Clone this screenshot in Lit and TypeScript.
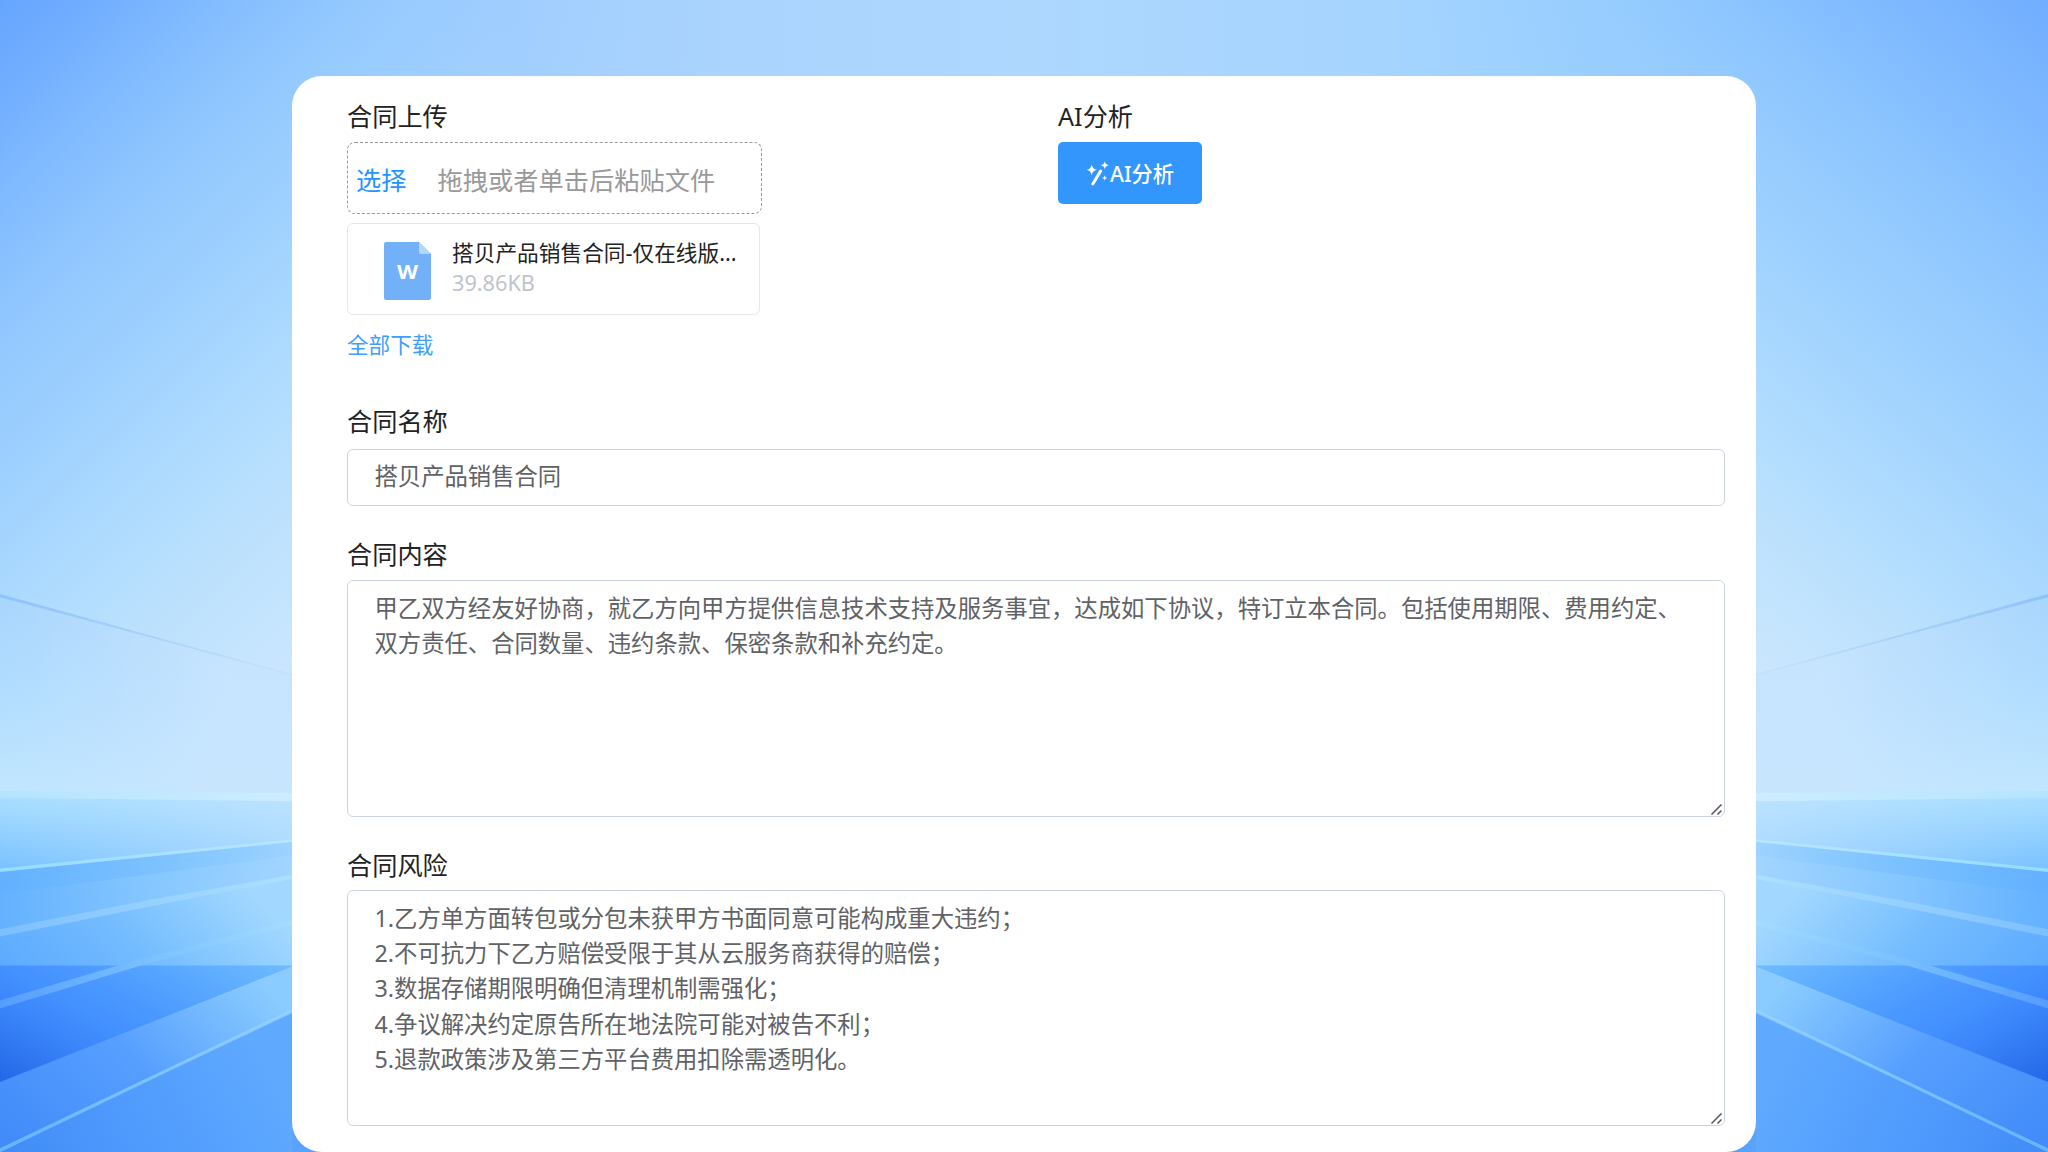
import { LitElement, html, svg, css } from "lit";
import { customElement, property } from "lit/decorators.js";

/** One side of the perspective backdrop; drawn once and mirrored for the other side. */
const sidePanel = () => svg`
  <polygon points="0,591 292,661 292,768 0,766" fill="url(#wall)"></polygon>
  <polygon points="0,591 292,661 292,768 0,766" fill="url(#wallSide)"></polygon>
  <polygon points="0,590 292,661 292,662 0,593" fill="url(#wallEdge)"></polygon>

  <polygon points="0,770 292,772 292,815 0,836" fill="url(#floorFar)"></polygon>
  <polygon points="0,770 292,772 292,812 0,836" fill="url(#fadeRight)"></polygon>
  <polygon points="0,764 292,766 292,773 0,770" fill="url(#horizon)"></polygon>

  <polygon points="0,833 292,807 292,823 0,857" fill="url(#b1)"></polygon>
  <polygon points="0,855 292,821 292,840 0,892" fill="url(#b2)"></polygon>
  <polygon points="0,890 292,840 292,920 0,920" fill="url(#b3)"></polygon>
  <polygon points="0,918 292,918 292,1152 0,1152" fill="url(#deep)"></polygon>
  <polygon points="0,1021 292,919 292,1152 0,1152" fill="url(#b5)"></polygon>
  <polygon points="0,1083 292,960 292,1152 0,1152" fill="url(#near)"></polygon>

  <polygon points="0,832.5 292,806.5 292,809 0,835.5" fill="url(#lineA)"></polygon>
  <polygon points="0,886 150,860 292,838 292,841.5 150,866 0,892.5" fill="url(#lineB)"></polygon>
  <polygon points="0,949 145,911 292,878 292,882 145,917 0,956" fill="url(#lineC)"></polygon>
  <polygon points="0,1079.5 292,956.5 292,959 0,1083" fill="url(#lineD)"></polygon>
`;

@customElement("app-backdrop")
export class AppBackdrop extends LitElement {
  static styles = css`
    :host { display: block; }
    .art { display: block; width: 100%; height: 100%; }
  `;

  render() {
    return html`
      <svg class="art" viewBox="0 0 2048 1152" preserveAspectRatio="none" aria-hidden="true">
        <defs>
          <linearGradient id="skyL" gradientUnits="userSpaceOnUse" x1="0" y1="0" x2="419.8" y2="493.5" gradientTransform="scale(1 1.148)">
            <stop offset="0" stop-color="#66a5ff"></stop>
            <stop offset=".12" stop-color="#74b0ff"></stop>
            <stop offset=".24" stop-color="#85beff"></stop>
            <stop offset=".35" stop-color="#92c8fe"></stop>
            <stop offset=".47" stop-color="#9ccfff"></stop>
            <stop offset=".59" stop-color="#a8d7fe"></stop>
            <stop offset=".71" stop-color="#b4defe"></stop>
            <stop offset=".83" stop-color="#bfe2fd"></stop>
            <stop offset="1" stop-color="#cce7fd"></stop>
          </linearGradient>
          <linearGradient id="skyR" gradientUnits="userSpaceOnUse" x1="2048" y1="0" x2="1640" y2="544" gradientTransform="scale(1 1.148)">
            <stop offset="0" stop-color="#70adff"></stop>
            <stop offset=".12" stop-color="#7cb7ff"></stop>
            <stop offset=".24" stop-color="#87c1ff"></stop>
            <stop offset=".35" stop-color="#92c9fe"></stop>
            <stop offset=".47" stop-color="#9cd0ff"></stop>
            <stop offset=".59" stop-color="#a8d7fe"></stop>
            <stop offset=".71" stop-color="#b4defe"></stop>
            <stop offset=".83" stop-color="#c1e3fd"></stop>
            <stop offset="1" stop-color="#cee8fd"></stop>
          </linearGradient>
          <linearGradient id="skyTop" gradientUnits="userSpaceOnUse" x1="292" y1="0" x2="1756" y2="0">
            <stop offset="0" stop-color="#95c8ff" stop-opacity="0"></stop>
            <stop offset=".15" stop-color="#9fccff" stop-opacity=".8"></stop>
            <stop offset=".3" stop-color="#aad4fd"></stop>
            <stop offset=".5" stop-color="#add7fd"></stop>
            <stop offset=".75" stop-color="#a5d4ff"></stop>
            <stop offset=".88" stop-color="#98ceff" stop-opacity=".8"></stop>
            <stop offset="1" stop-color="#8ec7ff" stop-opacity="0"></stop>
          </linearGradient>
          <linearGradient id="wall" gradientUnits="userSpaceOnUse" x1="60" y1="590" x2="40" y2="768">
            <stop offset="0" stop-color="#9fd0fc"></stop>
            <stop offset=".5" stop-color="#a9daff"></stop>
            <stop offset="1" stop-color="#bde6ff"></stop>
          </linearGradient>
          <linearGradient id="wallSide" gradientUnits="userSpaceOnUse" x1="0" y1="0" x2="292" y2="30">
            <stop offset="0" stop-color="#cbe6fe" stop-opacity="0"></stop>
            <stop offset="1" stop-color="#cbe6fe" stop-opacity=".88"></stop>
          </linearGradient>
          <linearGradient id="wallEdge" gradientUnits="userSpaceOnUse" x1="0" y1="0" x2="292" y2="0">
            <stop offset="0" stop-color="#8dc2fa"></stop>
            <stop offset="1" stop-color="#c4e1fc"></stop>
          </linearGradient>
          <linearGradient id="horizon" gradientUnits="userSpaceOnUse" x1="0" y1="0" x2="292" y2="0">
            <stop offset="0" stop-color="#b3e4ff"></stop>
            <stop offset="1" stop-color="#cdedff"></stop>
          </linearGradient>
          <linearGradient id="floorFar" gradientUnits="userSpaceOnUse" x1="0" y1="770" x2="0" y2="836">
            <stop offset="0" stop-color="#a8deff"></stop>
            <stop offset=".35" stop-color="#98d4ff"></stop>
            <stop offset="1" stop-color="#76c0ff"></stop>
          </linearGradient>
          <linearGradient id="fadeRight" gradientUnits="userSpaceOnUse" x1="0" y1="0" x2="292" y2="0">
            <stop offset="0" stop-color="#c8e6ff" stop-opacity="0"></stop>
            <stop offset="1" stop-color="#c8e6ff" stop-opacity=".6"></stop>
          </linearGradient>
          <linearGradient id="b1" gradientUnits="userSpaceOnUse" x1="0" y1="850" x2="292" y2="812">
            <stop offset="0" stop-color="#62b0ff"></stop>
            <stop offset=".55" stop-color="#7cc2ff"></stop>
            <stop offset="1" stop-color="#9dd3ff"></stop>
          </linearGradient>
          <linearGradient id="b2" gradientUnits="userSpaceOnUse" x1="0" y1="870" x2="292" y2="830">
            <stop offset="0" stop-color="#64b1ff"></stop>
            <stop offset=".5" stop-color="#84c6ff"></stop>
            <stop offset="1" stop-color="#a2d5ff"></stop>
          </linearGradient>
          <linearGradient id="b3" gradientUnits="userSpaceOnUse" x1="20" y1="950" x2="170" y2="780">
            <stop offset="0" stop-color="#5aa8ff"></stop>
            <stop offset=".5" stop-color="#74bcff"></stop>
            <stop offset="1" stop-color="#a2d8ff"></stop>
          </linearGradient>
          <linearGradient id="deep" gradientUnits="userSpaceOnUse" x1="0" y1="1020" x2="100" y2="820">
            <stop offset="0" stop-color="#2367e8"></stop>
            <stop offset=".08" stop-color="#2a70ec"></stop>
            <stop offset=".28" stop-color="#3b86fa"></stop>
            <stop offset=".41" stop-color="#4390ff"></stop>
            <stop offset=".54" stop-color="#4a98ff"></stop>
            <stop offset=".7" stop-color="#55a5ff"></stop>
            <stop offset="1" stop-color="#70bcff"></stop>
          </linearGradient>
          <linearGradient id="b5" gradientUnits="userSpaceOnUse" x1="0" y1="1060" x2="180" y2="860">
            <stop offset="0" stop-color="#428cf9"></stop>
            <stop offset=".5" stop-color="#579fff"></stop>
            <stop offset="1" stop-color="#8accff"></stop>
          </linearGradient>
          <linearGradient id="near" gradientUnits="userSpaceOnUse" x1="0" y1="1100" x2="240" y2="960">
            <stop offset="0" stop-color="#3f8bf7"></stop>
            <stop offset=".5" stop-color="#4f9bfd"></stop>
            <stop offset="1" stop-color="#5fa9ff"></stop>
          </linearGradient>
          <linearGradient id="lineA" gradientUnits="userSpaceOnUse" x1="0" y1="0" x2="292" y2="0">
            <stop offset="0" stop-color="#94dcff"></stop>
            <stop offset="1" stop-color="#b9e5ff"></stop>
          </linearGradient>
          <linearGradient id="lineB" gradientUnits="userSpaceOnUse" x1="0" y1="0" x2="292" y2="0">
            <stop offset="0" stop-color="#7cbfff"></stop>
            <stop offset="1" stop-color="#aee0ff"></stop>
          </linearGradient>
          <linearGradient id="lineC" gradientUnits="userSpaceOnUse" x1="0" y1="0" x2="292" y2="0">
            <stop offset="0" stop-color="#559dfc"></stop>
            <stop offset=".5" stop-color="#78c0ff"></stop>
            <stop offset="1" stop-color="#a4ddff"></stop>
          </linearGradient>
          <linearGradient id="lineD" gradientUnits="userSpaceOnUse" x1="0" y1="0" x2="292" y2="0">
            <stop offset="0" stop-color="#66b2ff"></stop>
            <stop offset="1" stop-color="#92d2ff"></stop>
          </linearGradient>
        </defs>
        <rect x="0" y="0" width="1024" height="1152" fill="url(#skyL)"></rect>
        <rect x="1024" y="0" width="1024" height="1152" fill="url(#skyR)"></rect>
        <rect x="292" y="0" width="1464" height="120" fill="url(#skyTop)"></rect>
        <rect x="292" y="1100" width="1464" height="52" fill="#57a3ff"></rect>
        <g transform="translate(0 -74.3) scale(1 1.1326)">${sidePanel()}</g>
        <g transform="translate(2048 -74.3) scale(-1 1.1326)">${sidePanel()}</g>
      </svg>
    `;
  }
}

@customElement("app-textarea")
export class AppTextarea extends LitElement {
  @property() value = "";

  static styles = css`
    :host { display: block; position: relative; }
    .area {
      display: block; box-sizing: border-box; width: 100%; height: 100%; margin: 0;
      padding: 10px 27px 0 26.5px; border: 1px solid #cdd3e2; border-radius: 6px; outline: none;
      resize: none; overflow: hidden; background: #fff; color: #606266;
      font: 400 23.33px/35.2px "Noto Sans", "Noto Sans CJK SC", sans-serif;
    }
    .grip { position: absolute; right: 3px; bottom: 2px; width: 11px; height: 11px; }
  `;

  render() {
    return html`
      <textarea class="area" .value=${this.value}></textarea>
      <svg class="grip" viewBox="0 0 11 11" fill="none" stroke="#555" stroke-width="1.5">
        <path d="M.5 10.5 10.5.5M6.5 10.5 10.5 6.5"></path>
      </svg>
    `;
  }
}

@customElement("app-root")
export class AppRoot extends LitElement {
  static styles = css`
    :host {
      display: block; position: relative; height: 1152px; overflow: hidden; color: #222;
      font-family: "Noto Sans", "Noto Sans CJK SC", sans-serif;
    }
    .backdrop { position: absolute; inset: 0; }
    .page { position: relative; box-sizing: border-box; height: 100%; padding: 76px 292px 0; }
    .card {
      box-sizing: border-box; height: 1076px; padding: 26px 31px 0 55px;
      border-radius: 30px; background: #fff;
    }
    .top { display: grid; grid-template-columns: 711px 1fr; height: 259px; margin-bottom: 46px; }
    .label { height: 30px; margin-bottom: 10px; font-size: 25.2px; line-height: 28px; white-space: nowrap; }
    .drop {
      display: flex; align-items: center; box-sizing: border-box; width: 415px; height: 72px;
      padding: 3px 8px 0; border: 1px dashed #999; border-radius: 8px;
      font-size: 25.25px; line-height: 36px; white-space: nowrap;
    }
    .pick { margin-right: 31px; color: #2395ff; }
    .hint { color: #999; }
    .file {
      display: flex; align-items: flex-start; box-sizing: border-box; width: 413px; height: 92px;
      margin-top: 9px; padding: 18px 20px 0 36px; border: 1px solid #e4e7ed; border-radius: 6px;
    }
    .doc { flex: none; width: 47px; height: 58px; margin-right: 21px; }
    .doc-letter { font: 700 20px "Noto Sans", sans-serif; }
    .meta { display: flex; flex-direction: column; margin-top: -4px; font-size: 21.7px; white-space: nowrap; }
    .name { height: 30px; line-height: 30px; }
    .size { height: 30px; line-height: 30px; color: #c0c4cc; }
    .all { height: 30px; margin-top: 15px; color: #409eff; font-size: 21.6px; line-height: 30px; }
    .ai {
      display: flex; align-items: center; box-sizing: border-box; width: 144px; height: 62px;
      margin: 0; padding: 0 0 0 28px; border: 0; border-radius: 5px; background: #3296fc; color: #fff;
      font: 500 21.3px/30px "Noto Sans", "Noto Sans CJK SC", sans-serif; white-space: nowrap;
    }
    .ai-text { padding-top: 2px; }
    .wand { flex: none; width: 24px; height: 26px; }
    .field { margin-bottom: 34px; }
    .name-label { margin-bottom: 12px; }
    .risk-label { margin-bottom: 9px; }
    .input {
      display: block; box-sizing: border-box; width: 100%; height: 57px; margin: 0; padding: 0 27px 5px 26.5px;
      border: 1px solid #cdd3e2; border-radius: 6px; outline: none; background: #fff; color: #606266;
      font: 400 23.33px/35px "Noto Sans", "Noto Sans CJK SC", sans-serif;
    }
    .content { height: 237px; }
    .risk { height: 236px; }
  `;

  private contractName = "搭贝产品销售合同";
  private content =
    "甲乙双方经友好协商，就乙方向甲方提供信息技术支持及服务事宜，达成如下协议，特订立本合同。包括使用期限、费用约定、双方责任、合同数量、违约条款、保密条款和补充约定。";
  private risks = [
    "1.乙方单方面转包或分包未获甲方书面同意可能构成重大违约；",
    "2.不可抗力下乙方赔偿受限于其从云服务商获得的赔偿；",
    "3.数据存储期限明确但清理机制需强化；",
    "4.争议解决约定原告所在地法院可能对被告不利；",
    "5.退款政策涉及第三方平台费用扣除需透明化。",
  ];

  render() {
    return html`
      <app-backdrop class="backdrop"></app-backdrop>
      <main class="page">
        <section class="card">
          <div class="top">
            <div>
              <div class="label">合同上传</div>
              <div class="drop"><span class="pick">选择</span><span class="hint">拖拽或者单击后粘贴文件</span></div>
              <div class="file">
                <svg class="doc" viewBox="0 0 47 58">
                  <path d="M2 0H35L47 12V56a2 2 0 0 1-2 2H2a2 2 0 0 1-2-2V2a2 2 0 0 1 2-2Z" fill="#72b1f8"></path>
                  <path d="M35 0 47 12H37a2 2 0 0 1-2-2Z" fill="#b0d8ff"></path>
                  <text class="doc-letter" x="23.5" y="37" text-anchor="middle" textLength="21" lengthAdjust="spacingAndGlyphs" fill="#fff">W</text>
                </svg>
                <div class="meta">
                  <div class="name">搭贝产品销售合同-仅在线版...</div>
                  <div class="size">39.86KB</div>
                </div>
              </div>
              <div class="all">全部下载</div>
            </div>
            <div>
              <div class="label">AI分析</div>
              <button class="ai">
                <svg class="wand" viewBox="0 0 24 26" fill="#fff">
                  <path d="M5.7 4.2Q6.3 9 11 9.8Q6.3 10.5 5.7 15.6Q5.1 10.5.6 9.8Q5.1 9 5.7 4.2Z"></path>
                  <path d="M18.8 1Q19.3 4.8 23 5.3Q19.3 5.8 18.8 9.6Q18.3 5.8 14.6 5.3Q18.3 4.8 18.8 1Z"></path>
                  <path d="M18.7 15.4Q19 17.7 21.3 18Q19 18.3 18.7 20.6Q18.4 18.3 16.1 18Q18.4 17.7 18.7 15.4Z"></path>
                  <path d="M14.6 11 6.8 24" fill="none" stroke="#fff" stroke-width="3" stroke-linecap="round"></path>
                </svg>
                <span class="ai-text">AI分析</span>
              </button>
            </div>
          </div>
          <div class="field">
            <div class="label name-label">合同名称</div>
            <input class="input" .value=${this.contractName} />
          </div>
          <div class="field">
            <div class="label">合同内容</div>
            <app-textarea class="content" .value=${this.content}></app-textarea>
          </div>
          <div>
            <div class="label risk-label">合同风险</div>
            <app-textarea class="risk" .value=${this.risks.join("\n")}></app-textarea>
          </div>
        </section>
      </main>
    `;
  }
}
